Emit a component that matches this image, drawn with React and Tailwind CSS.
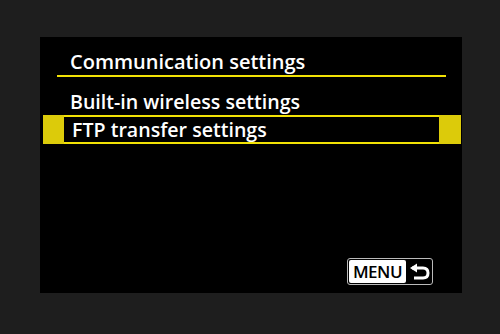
export default function App() {
  return (
    <div className="w-[500px] h-[334px] bg-[#1e1e1e] pt-[37px] pl-[40px]" style={{ fontFamily: '"Open Sans", "Noto Sans", sans-serif' }}>
      <div className="w-[422px] h-[256px] bg-black flex flex-col relative">
        <div className="pl-[30px] pt-[12px] h-[26px] text-white font-semibold text-[20px] leading-[26px] box-content">
          Communication settings
        </div>
        <div className="ml-[17px] w-[389px] h-[2px] bg-[#f2e205]" />
        <div className="pl-[30px] mt-[13px] text-white font-semibold text-[19.6px] leading-[24px]">
          Built-in wireless settings
        </div>
        <div className="ml-[3px] mt-[1px] w-[418px] h-[29px] flex">
          <div className="w-[21px] bg-[#dccb0a]" />
          <div className="flex-1 border-y-2 border-[#f2e205] flex items-center pl-[8px] text-white font-semibold text-[19.6px] leading-[24px]">
            FTP transfer settings
          </div>
          <div className="w-[22px] bg-[#dccb0a]" />
        </div>
        <div className="flex-1" />
        <div className="flex justify-end pr-[29px] pb-[8px]">
          <div className="w-[86px] h-[27px] border border-[#bbbbbb] rounded-[3px] flex items-center p-[1px] gap-[2px]">
            <div className="w-[57px] h-[23px] bg-white rounded-[2px] flex items-center justify-center text-black font-semibold text-[17px] leading-none tracking-[-0.5px]">
              MENU
            </div>
            <svg width="22" height="18" viewBox="0 0 22 18" className="ml-[1px]">
              <path d="M3 5 L14 5 Q19 5 19 10 Q19 15 14 15 L5 15" fill="none" stroke="white" strokeWidth="3" />
              <path d="M1 5 L8 0.5 L8 9.5 Z" fill="white" />
            </svg>
          </div>
        </div>
      </div>
    </div>
  );
}
